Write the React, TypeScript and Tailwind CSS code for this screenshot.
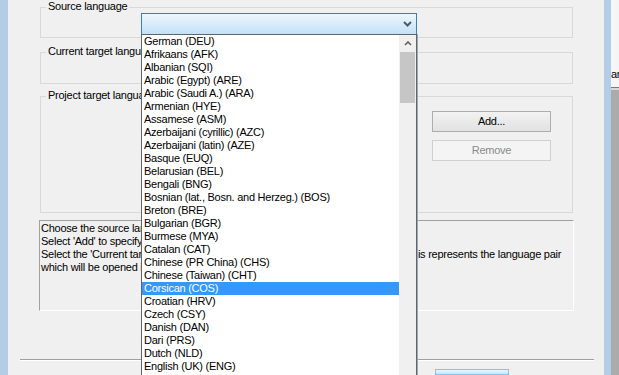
import React from "react";

const languages = [
  "German (DEU)",
  "Afrikaans (AFK)",
  "Albanian (SQI)",
  "Arabic (Egypt) (ARE)",
  "Arabic (Saudi A.) (ARA)",
  "Armenian (HYE)",
  "Assamese (ASM)",
  "Azerbaijani (cyrillic) (AZC)",
  "Azerbaijani (latin) (AZE)",
  "Basque (EUQ)",
  "Belarusian (BEL)",
  "Bengali (BNG)",
  "Bosnian (lat., Bosn. and Herzeg.) (BOS)",
  "Breton (BRE)",
  "Bulgarian (BGR)",
  "Burmese (MYA)",
  "Catalan (CAT)",
  "Chinese (PR China) (CHS)",
  "Chinese (Taiwan) (CHT)",
  "Corsican (COS)",
  "Croatian (HRV)",
  "Czech (CSY)",
  "Danish (DAN)",
  "Dari (PRS)",
  "Dutch (NLD)",
  "English (UK) (ENG)",
  "English (US) (ENU)",
  "Estonian (ETI)",
];

const selected = "Corsican (COS)";

const GroupBox = ({ label, className, children }: { label: string; className: string; children?: React.ReactNode }) => {
  return (
    <div className={`relative w-[533px] border border-[#d9d9d9] ${className}`}>
      <div className="absolute left-[5px] top-[-8px] bg-[#f0f0f0] px-[2px] leading-[13px]">{label}</div>
      {children}
    </div>
  );
};

const LanguageList = () => {
  return (
    <div className="absolute left-[-1px] top-full z-10 flex h-[345px] w-[276px] border border-[#646464] bg-white shadow-[1px_0_0_#9aa8b8]">
      <div className="flex w-[257px] flex-col">
        {languages.map((lang) => (
          <div
            key={lang}
            className={`h-[13px] whitespace-nowrap pl-[2px] leading-[13px] ${
              lang === selected ? "bg-[#3399ff] text-white" : "text-black"
            }`}
          >
            {lang}
          </div>
        ))}
      </div>
      <div className="flex w-[17px] flex-col bg-[#f0f0f0]">
        <div className="flex h-[17px] items-center justify-center">
          <svg width="8" height="5" viewBox="0 0 8 5">
            <polyline points="1,4 4,1 7,4" fill="none" stroke="#606060" strokeWidth="1.6" />
          </svg>
        </div>
        <div className="ml-[1px] h-[51px] w-[15px] bg-[#c6c6c6]" />
      </div>
    </div>
  );
};

export default function App() {
  return (
    <div
      className="flex h-[375px] w-[619px] overflow-hidden text-[11px] tracking-[-0.25px] text-black"
      style={{ fontFamily: '"Liberation Sans", Arial, sans-serif' }}
    >
      <div className="w-[8px] shrink-0 bg-[#b4cde6]" />

      <div className="flex w-[596px] shrink-0 flex-col bg-[#f0f0f0]">
        <div className="flex flex-col pl-[32px] pt-[7px]">
          <GroupBox label="Source language" className="h-[31px]">
            <div className="relative ml-[100px] mt-[5px] flex h-[22px] w-[276px] items-center justify-end border border-[#3c7fb1] bg-gradient-to-b from-[#eef7fd] to-[#c3e1f7] pr-[4px]">
              <svg width="9" height="6" viewBox="0 0 9 6">
                <polyline points="1,1 4.5,4.5 8,1" fill="none" stroke="#4d5b6a" strokeWidth="2" />
              </svg>
              <LanguageList />
            </div>
          </GroupBox>

          <GroupBox label="Current target language" className="mt-[14px] h-[32px]" />

          <GroupBox label="Project target languages" className="mt-[12px] h-[117px]">
            <div className="flex flex-col items-end gap-[8px] pr-[21px] pt-[14px]">
              <button className="h-[21px] w-[119px] border border-[#adadad] bg-gradient-to-b from-[#f2f2f2] to-[#e2e2e2] leading-[19px]">
                Add...
              </button>
              <button className="h-[21px] w-[119px] border border-[#d0d0d0] bg-[#f4f4f4] leading-[19px] text-[#8a8a8a]">
                Remove
              </button>
            </div>
          </GroupBox>

          <div className="ml-[-1px] mt-[7px] h-[91px] w-[535px] border border-b-white border-l-[#a0a0a0] border-r-white border-t-[#a0a0a0] pl-[1px] pt-[1px] leading-[13px]">
            <div className="whitespace-nowrap">Choose the source language of the project.</div>
            <div className="whitespace-nowrap">Select 'Add' to specify the target languages of the project.</div>
            <div className="whitespace-nowrap">
              Select the 'Current target language' from the list of all project target languages. This represents the language pair
            </div>
            <div className="whitespace-nowrap">which will be opened in the editor.</div>
          </div>
        </div>

        <div className="ml-[12px] mt-[48px] h-[2px] w-[574px] border-b border-t border-b-white border-t-[#a0a0a0]" />

        <div className="ml-[427px] mt-[8px] h-[22px] w-[74px] border border-[#8ec0ea] bg-gradient-to-b from-[#e8f7fd] to-[#c8e8fa]" />
      </div>

      <div className="w-[7px] shrink-0 bg-[#b4cde6]" />

      <div className="flex flex-1 flex-col">
        <div className="flex h-[87px] flex-col justify-end bg-[#f5f5f5] pb-[6px]">
          <div className="whitespace-nowrap leading-[13px]">ar</div>
        </div>
        <div className="h-[3px] border-t border-[#7a7a7a] bg-[#d8d8d8]" />
        <div className="flex-1 bg-[#ababab]" />
      </div>
    </div>
  );
}
